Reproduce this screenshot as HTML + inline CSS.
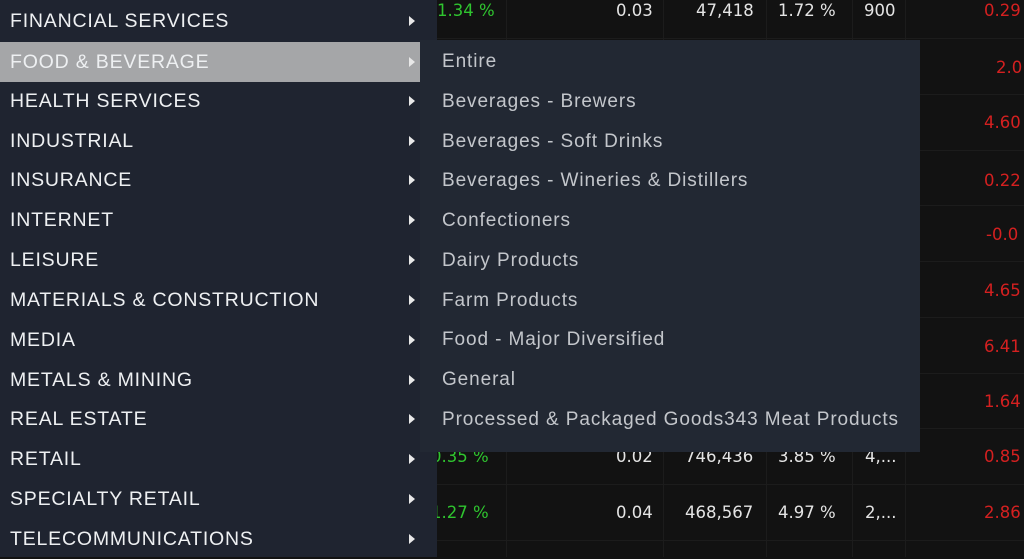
<!DOCTYPE html><html><head><style>
body{margin:0;width:1024px;height:557px;overflow:hidden;background:#121212;font-family:"Liberation Sans",sans-serif;position:relative}
.l{position:absolute;left:0;top:0;width:437px;height:557px;background:#1f2430}
.mi{position:absolute;left:0;width:423px;height:40px;color:#eef0f2;font-size:19.5px;line-height:40px;padding-left:10px;box-sizing:border-box;letter-spacing:.8px}
.mi:after{content:"";position:absolute;left:409px;top:15px;border-left:6px solid #e8e8e8;border-top:5px solid transparent;border-bottom:5px solid transparent}
.hl{background:#a5a6a8}
.sub{position:absolute;left:420px;top:40px;width:500px;height:412px;background:#222833}
.si{position:absolute;left:22px;color:#c3c6cb;font-size:19px;letter-spacing:.9px;white-space:nowrap}
.t{position:absolute;font-size:16.5px;color:#e4e4e4;font-family:"DejaVu Sans",sans-serif;white-space:nowrap}
.g{color:#2fc42f}.r{color:#d42020}
.hr{position:absolute;left:437px;right:0;height:1px;background:#1c1c1c}
.vr{position:absolute;top:0;height:557px;width:1px;background:#1c1c1c}
</style></head><body>
<div class="vr" style="left:506px"></div><div class="vr" style="left:663px"></div><div class="vr" style="left:766px"></div><div class="vr" style="left:852px"></div><div class="vr" style="left:905px"></div>
<div class="hr" style="top:38px"></div><div class="hr" style="top:94px"></div><div class="hr" style="top:150px"></div><div class="hr" style="top:205px"></div><div class="hr" style="top:261px"></div><div class="hr" style="top:317px"></div><div class="hr" style="top:373px"></div><div class="hr" style="top:428px"></div><div class="hr" style="top:484px"></div><div class="hr" style="top:540px"></div>
<div class="t g" style="left:437px;top:1px">1.34 %</div>
<div class="t" style="left:616px;top:1px">0.03</div><div class="t" style="left:696px;top:1px">47,418</div><div class="t" style="left:778px;top:1px">1.72 %</div><div class="t" style="left:864px;top:1px">900</div>
<div class="t g" style="left:431px;top:447px">0.35 %</div><div class="t" style="left:616px;top:447px">0.02</div><div class="t" style="left:685px;top:447px">746,436</div><div class="t" style="left:778px;top:447px">3.85 %</div><div class="t" style="left:865px;top:447px">4,...</div>
<div class="t g" style="left:431px;top:503px">1.27 %</div><div class="t" style="left:616px;top:503px">0.04</div><div class="t" style="left:685px;top:503px">468,567</div><div class="t" style="left:778px;top:503px">4.97 %</div><div class="t" style="left:865px;top:503px">2,...</div>
<div class="t r" style="left:984px;top:1px">0.29</div><div class="t r" style="left:996px;top:58px">2.0</div>
<div class="t r" style="left:984px;top:113px">4.60</div><div class="t r" style="left:984px;top:171px">0.22</div><div class="t r" style="left:986px;top:225px">-0.0</div><div class="t r" style="left:984px;top:281px">4.65</div><div class="t r" style="left:984px;top:337px">6.41</div><div class="t r" style="left:984px;top:392px">1.64</div><div class="t r" style="left:984px;top:447px">0.85</div><div class="t r" style="left:984px;top:503px">2.86</div>
<div class="l">
<div class="mi" style="top:1px">FINANCIAL SERVICES</div>
<div class="mi hl" style="top:42px">FOOD &amp; BEVERAGE</div>
<div class="mi" style="top:81px">HEALTH SERVICES</div>
<div class="mi" style="top:121px">INDUSTRIAL</div>
<div class="mi" style="top:160px">INSURANCE</div>
<div class="mi" style="top:200px">INTERNET</div>
<div class="mi" style="top:240px">LEISURE</div>
<div class="mi" style="top:280px">MATERIALS &amp; CONSTRUCTION</div>
<div class="mi" style="top:320px">MEDIA</div>
<div class="mi" style="top:360px">METALS &amp; MINING</div>
<div class="mi" style="top:399px">REAL ESTATE</div>
<div class="mi" style="top:439px">RETAIL</div>
<div class="mi" style="top:479px">SPECIALTY RETAIL</div>
<div class="mi" style="top:519px">TELECOMMUNICATIONS</div>
</div>
<div class="sub">
<div class="si" style="top:11px">Entire</div>
<div class="si" style="top:51px">Beverages - Brewers</div>
<div class="si" style="top:91px">Beverages - Soft Drinks</div>
<div class="si" style="top:130px">Beverages - Wineries &amp; Distillers</div>
<div class="si" style="top:170px">Confectioners</div>
<div class="si" style="top:210px">Dairy Products</div>
<div class="si" style="top:250px">Farm Products</div>
<div class="si" style="top:289px">Food - Major Diversified</div>
<div class="si" style="top:329px">General</div>
<div class="si" style="top:369px">Processed &amp; Packaged Goods343 Meat Products</div>
</div>
</body></html>
